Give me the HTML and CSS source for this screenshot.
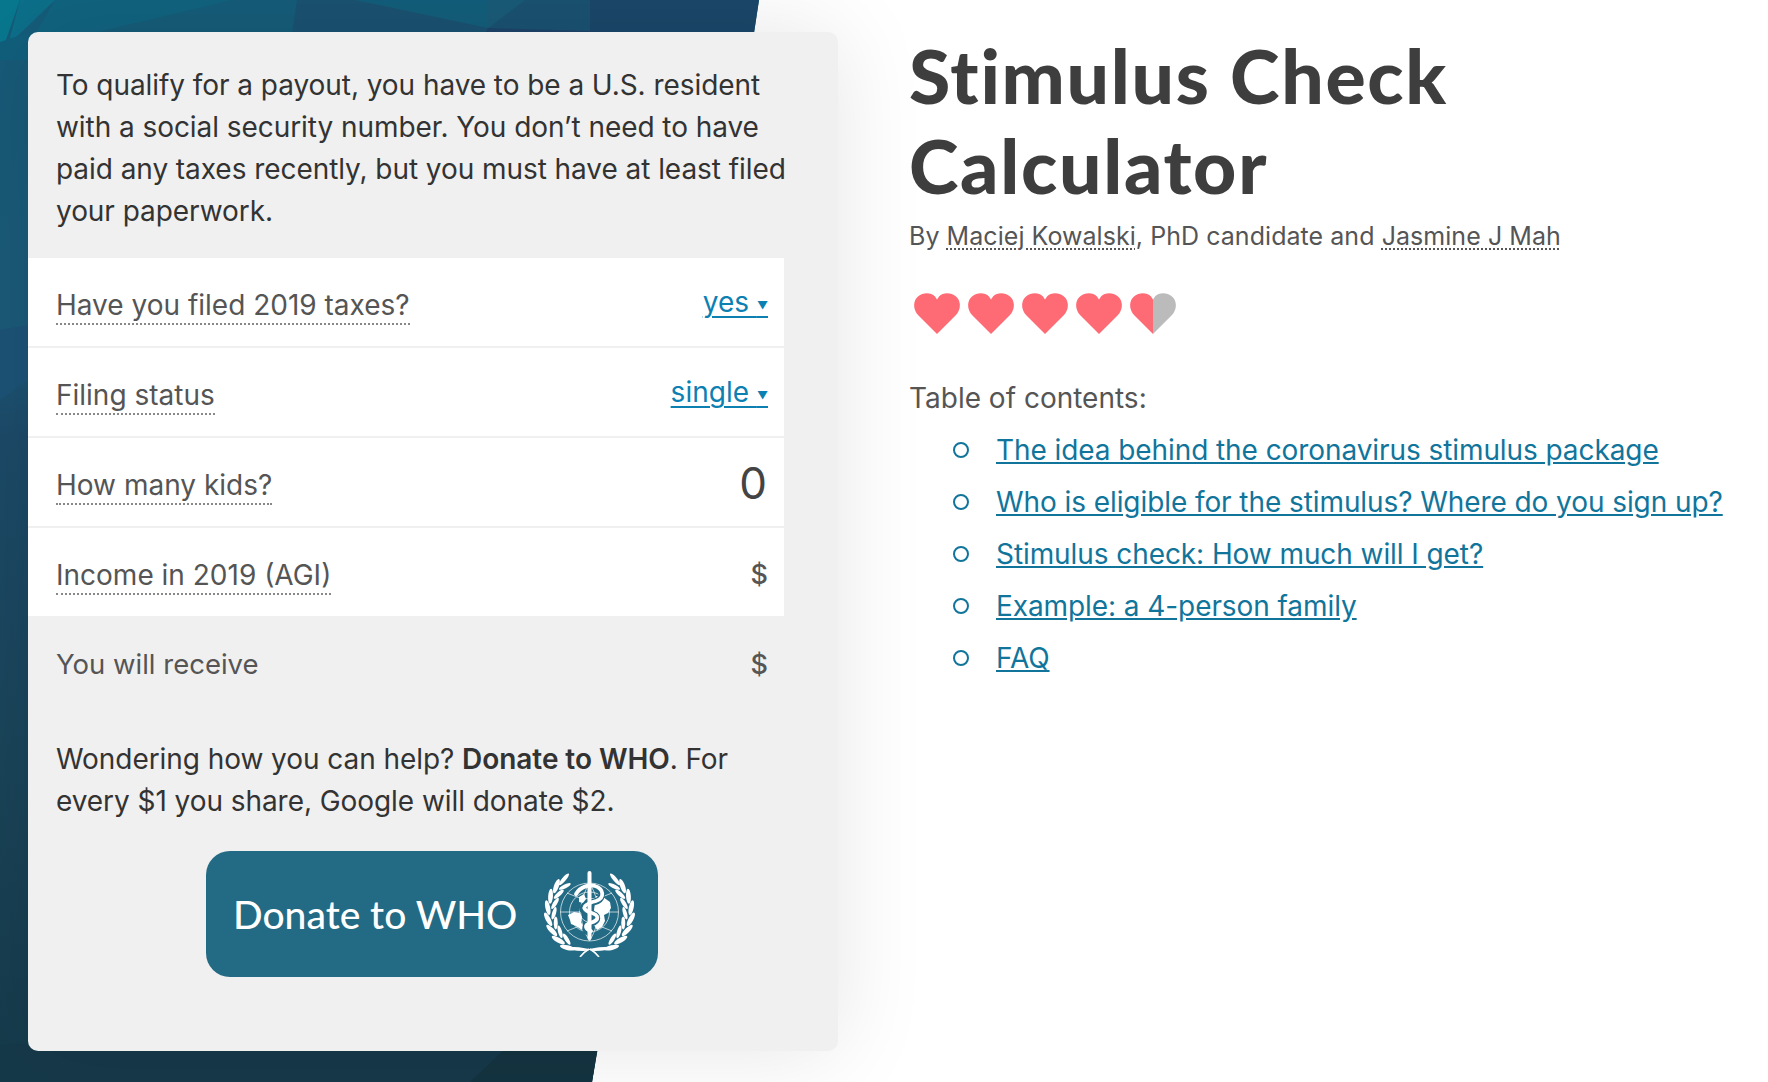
FILE: index.html
```html
<!DOCTYPE html>
<html lang="en">
<head>
<meta charset="utf-8">
<title>Stimulus Check Calculator</title>
<link rel="stylesheet" href="styles.css">
</head>
<body>
<svg class="backdrop" viewBox="0 0 1768 1082" width="1768" height="1082" aria-hidden="true">
  <defs>
    <linearGradient id="bgGrad" x1="0" y1="0" x2="0.1" y2="1">
      <stop offset="0" stop-color="#165a78"/>
      <stop offset="0.3" stop-color="#1b5a78"/>
      <stop offset="0.4" stop-color="#1c4a68"/>
      <stop offset="0.7" stop-color="#1a4459"/>
      <stop offset="1" stop-color="#153a4a"/>
    </linearGradient>
  </defs>
  <polygon points="0,0 759,0 592,1082 0,1082" fill="url(#bgGrad)"/>
  <polygon points="0,0 759,0 750,60 590,60 590,0" fill="#1b4769"/>
  <polygon points="297,0 590,0 590,60 288,60" fill="#1a5271"/>
  <polygon points="355,0 525,0 488,28" fill="#135e7b"/>
  <polygon points="488,0 525,0 488,28" fill="#1a5b78"/>
  <polygon points="488,28 758,36 758,60 470,60" fill="#1d4468"/>
  <polygon points="20,0 297,0 288,60 0,60" fill="#155c79"/>
  <polygon points="55,0 232,0 65,40 20,60" fill="#11637f"/>
  <polygon points="0,0 20,0 6,40 0,45" fill="#08788f"/>
  <polygon points="20,0 55,0 8,45" fill="#0d6f8a"/>
  <polygon points="0,42 30,32 30,60 0,60" fill="#115f7c"/>
  <polygon points="0,330 28,325 28,380 0,400" fill="#1d5377"/>
  <polygon points="0,1082 520,1082 592,1082 600,1035 300,1035 0,1045" fill="#16394a"/>
  <polygon points="470,1082 592,1082 600,1035 520,1035" fill="#143441"/>
</svg>

<main class="page">
  <section class="card">
    <p class="note">To qualify for a payout, you have to be a U.S. resident with a social security number. You don’t need to have paid any taxes recently, but you must have at least filed your paperwork.</p>

    <div class="rows">
      <div class="row">
        <span class="label">Have you filed 2019 taxes?</span>
        <a class="choice" href="#">yes <span class="caret">▼</span></a>
      </div>
      <div class="row">
        <span class="label">Filing status</span>
        <a class="choice" href="#">single <span class="caret">▼</span></a>
      </div>
      <div class="row">
        <span class="label">How many kids?</span>
        <span class="count">0</span>
      </div>
      <div class="row">
        <span class="label">Income in 2019 (AGI)</span>
        <span class="money">$</span>
      </div>
      <div class="row row-result">
        <span class="result">You will receive</span>
        <span class="money">$</span>
      </div>
    </div>

    <p class="help">Wondering how you can help? <strong>Donate to WHO</strong>. For every $1 you share, Google will donate $2.</p>

    <a class="donate" href="#">
      <span class="donate-text">Donate to WHO</span>
      <svg class="who" viewBox="0 0 93 86" width="93" height="86" aria-hidden="true">
        <defs>
          <g id="laurel" fill="#fff">
            <ellipse cx="4.5" cy="41" rx="2.4" ry="7.5" transform="rotate(-58 46.5 41) rotate(-18 4.500 41)"/>
            <ellipse cx="4.5" cy="41" rx="2.4" ry="7.5" transform="rotate(-42 46.5 41) rotate(-18 4.500 41)"/>
            <ellipse cx="4.5" cy="41" rx="2.4" ry="7.5" transform="rotate(-26 46.5 41) rotate(-18 4.500 41)"/>
            <ellipse cx="4.5" cy="41" rx="2.4" ry="7.5" transform="rotate(-10 46.5 41) rotate(-18 4.500 41)"/>
            <ellipse cx="4.5" cy="41" rx="2.4" ry="7.5" transform="rotate(6 46.5 41) rotate(-18 4.500 41)"/>
            <ellipse cx="4.5" cy="41" rx="2.4" ry="7.5" transform="rotate(22 46.5 41) rotate(-18 4.500 41)"/>
            <ellipse cx="4.5" cy="41" rx="2.4" ry="7.5" transform="rotate(38 46.5 41) rotate(-18 4.500 41)"/>
            <ellipse cx="5" cy="41" rx="2" ry="7.5" transform="rotate(52 46.5 41) rotate(-12 5 41)"/>
            <ellipse cx="11" cy="41" rx="2" ry="6.500" transform="rotate(-50 46.5 41) rotate(18 11 41)"/>
            <ellipse cx="11" cy="41" rx="2" ry="6.500" transform="rotate(-34 46.5 41) rotate(18 11 41)"/>
            <ellipse cx="11" cy="41" rx="2" ry="6.500" transform="rotate(-18 46.5 41) rotate(18 11 41)"/>
            <ellipse cx="11" cy="41" rx="2" ry="6.500" transform="rotate(-2 46.5 41) rotate(18 11 41)"/>
            <ellipse cx="11" cy="41" rx="2" ry="6.500" transform="rotate(14 46.5 41) rotate(18 11 41)"/>
            <ellipse cx="11" cy="41" rx="2" ry="6.500" transform="rotate(30 46.5 41) rotate(18 11 41)"/>
            <ellipse cx="11" cy="41" rx="2" ry="6.500" transform="rotate(46 46.5 41) rotate(18 11 41)"/>
          </g>
        </defs>
        <use href="#laurel"/>
        <use href="#laurel" transform="translate(93 0) scale(-1 1)"/>
        <g fill="none" stroke="#fff" stroke-width="0.9" stroke-opacity="0.75">
          <circle cx="46.5" cy="41" r="29"/>
          <circle cx="46.5" cy="41" r="20"/>
          <circle cx="46.5" cy="41" r="10"/>
          <path d="M17.500 41H75.500M24 22Q46.500 34 69 22M24 60Q46.500 48 69 60M46.500 12Q29 41 46.500 70Q64 41 46.500 12"/>
        </g>
        <path fill="#fff" d="M25 44l6-3 6 1 2 4-1 5 3 6-2 2-6-4-5-2-1-4zM53 25l7 1 7 5 1 6-3 5-4 2 1 6-3 6-5 3-3-5 2-8-2-7 1-7zM36 26l5-3 2 5-3 4-4-1z"/>
        <path fill="none" stroke="#236a84" stroke-width="6.500" d="M52 16C62 20 60 29 51 31C38 34 36 40 46 42C57 44 56 50 47 53C40 55 42 60 47 62"/>
        <rect x="44.500" y="0" width="4" height="69" rx="2" fill="#fff"/>
        <path fill="none" stroke="#fff" stroke-width="3.800" stroke-linecap="round" d="M33 23C37 16 46 13 52 15C61 18 62 27 53 30C42 33 37 37 46 41C57 44 57 49 47 52C41 54 42 58 48 60"/>
        <path fill="#fff" d="M19 76q14-1 27 2q13-3 28-2q-10 4-22 4q-3 0-5.500-1q-3 1-6.500 1q-12 0-21-4z"/>
        <path fill="none" stroke="#fff" stroke-width="1.6" d="M46 78Q41 81 37 86M47 78Q52 81 56 86"/>
      </svg>
    </a>
  </section>

  <article class="intro">
    <h1 class="title">Stimulus Check Calculator</h1>
    <p class="byline">By <span class="author">Maciej Kowalski</span>, PhD candidate and <span class="author">Jasmine J Mah</span></p>

    <div class="hearts">
      <svg class="heart" viewBox="0 0 46 41" width="46" height="41" aria-hidden="true"><path class="heart-on" d="M23 41L4.500 22.500C-1.500 16.500-1 7.500 4 3.500C9.500-1 17-.5 21 3.500L23 6.500L25 3.500C29-.5 36.500-1 42 3.500C47 7.500 47.500 16.500 41.500 22.500Z"/></svg>
      <svg class="heart" viewBox="0 0 46 41" width="46" height="41" aria-hidden="true"><path class="heart-on" d="M23 41L4.500 22.500C-1.500 16.500-1 7.500 4 3.500C9.500-1 17-.5 21 3.500L23 6.500L25 3.500C29-.5 36.500-1 42 3.500C47 7.500 47.500 16.500 41.500 22.500Z"/></svg>
      <svg class="heart" viewBox="0 0 46 41" width="46" height="41" aria-hidden="true"><path class="heart-on" d="M23 41L4.500 22.500C-1.500 16.500-1 7.500 4 3.500C9.500-1 17-.5 21 3.500L23 6.500L25 3.500C29-.5 36.500-1 42 3.500C47 7.500 47.500 16.500 41.500 22.500Z"/></svg>
      <svg class="heart" viewBox="0 0 46 41" width="46" height="41" aria-hidden="true"><path class="heart-on" d="M23 41L4.500 22.500C-1.500 16.500-1 7.500 4 3.500C9.500-1 17-.5 21 3.500L23 6.500L25 3.500C29-.5 36.500-1 42 3.500C47 7.500 47.500 16.500 41.500 22.500Z"/></svg>
      <svg class="heart" viewBox="0 0 46 41" width="46" height="41" aria-hidden="true"><path class="heart-off" d="M23 41L41.500 22.500C47.500 16.500 47 7.500 42 3.500C36.500-1 29-.5 25 3.500L23 6.500Z"/><path class="heart-on" d="M23 41L4.500 22.500C-1.500 16.500-1 7.500 4 3.500C9.500-1 17-.5 21 3.500L23 6.500Z"/></svg>
    </div>

    <p class="toc-title">Table of contents:</p>
    <ul class="toc">
      <li><a href="#">The idea behind the coronavirus stimulus package</a></li>
      <li><a href="#">Who is eligible for the stimulus? Where do you sign up?</a></li>
      <li><a href="#">Stimulus check: How much will I get?</a></li>
      <li><a href="#">Example: a 4-person family</a></li>
      <li><a href="#">FAQ</a></li>
    </ul>
  </article>
</main>
</body>
</html>
```

FILE: styles.css
```css
* { box-sizing: border-box; }

html, body {
  margin: 0;
  height: 1082px;
  overflow: hidden;
  background: #fff;
}

body {
  position: relative;
  font-family: Inter, "Liberation Sans", sans-serif;
  color: #555;
}

.backdrop {
  position: absolute;
  top: 0;
  left: 0;
  display: block;
}

.page {
  position: relative;
  display: flex;
  align-items: flex-start;
  gap: 71px;
  padding: 32px 0 0 28px;
}

.card {
  flex: 0 0 810px;
  height: 1019px;
  background: #f0f0f0;
  border-radius: 10px;
  box-shadow: 0 0 90px rgba(0, 0, 0, 0.1);
}

.note, .help {
  margin: 0;
  width: 770px;
  padding: 0 0 0 28px;
  font-size: 28px;
  letter-spacing: -0.06px;
  line-height: 42px;
  color: #333;
}

.note { padding-top: 32px; }

.rows {
  display: flex;
  flex-direction: column;
  gap: 2px;
  width: 756px;
  margin-top: 26px;
}

.row {
  display: flex;
  justify-content: space-between;
  align-items: center;
  height: 88px;
  padding: 0 16px 0 28px;
  background: #fff;
  font-size: 28px;
}

.row-result { background: transparent; }

.label {
  margin-top: 8px;
  line-height: 36px;
  border-bottom: 2px dotted #888;
  color: #555;
}

.result {
  margin-top: 4px;
  font-size: 27.5px;
  color: #555;
}

.choice {
  color: #0d80b2;
  text-decoration: underline;
  text-decoration-thickness: 2px;
  text-underline-offset: 4px;
}

.caret {
  font-size: 11px;
  vertical-align: 3px;
}

.count {
  margin-top: 2px;
  padding-right: 1px;
  font-size: 44px;
  line-height: 1;
  color: #444;
}

.money {
  margin-top: 4px;
  color: #555;
  font-size: 27px;
  font-weight: 500;
}

.help { margin-top: 32px; }

.help strong { font-weight: 600; }

.donate {
  display: flex;
  align-items: center;
  justify-content: space-between;
  width: 452px;
  height: 126px;
  margin: 29px 0 0 178px;
  padding: 0 22px 0 27px;
  background: #236a84;
  border-radius: 24px;
  text-decoration: none;
}

.donate-text {
  font-family: Lato, sans-serif;
  font-size: 39px;
  font-weight: 500;
  color: #fff;
}

.who { display: block; }

.intro {
  flex: 0 0 auto;
  width: 800px;
}

.title {
  margin: -2px 0 0;
  width: 700px;
  font-family: Lato, sans-serif;
  font-weight: 900;
  font-size: 75px;
  letter-spacing: 1.7px;
  font-variant-ligatures: none;
  line-height: 90px;
  color: #3e3e3e;
}

.byline {
  margin: 8px 0 0;
  font-size: 25px;
  letter-spacing: 0.05px;
  line-height: 36px;
  color: #555;
}

.author {
  text-decoration: underline dotted #555 2px;
  text-underline-offset: 3px;
}

.hearts {
  display: flex;
  gap: 8px;
  margin: 39px 0 0 5px;
}

.heart { display: block; }

.heart-on { fill: #ff6b75; }

.heart-off { fill: #bbb; }

.toc-title {
  margin: 44px 0 0;
  font-size: 28px;
  line-height: 40px;
  color: #555;
}

.toc {
  margin: 6px 0 0;
  padding: 0 0 0 44px;
  list-style: none;
  font-size: 28px;
  letter-spacing: -0.08px;
  line-height: 52px;
}

.toc li {
  display: flex;
  align-items: center;
  gap: 27px;
}

.toc li::before {
  content: "";
  flex: 0 0 12px;
  height: 12px;
  border: 2px solid #11759b;
  border-radius: 50%;
}

.toc a {
  color: #11759b;
  text-decoration: underline;
  white-space: nowrap;
}
```
